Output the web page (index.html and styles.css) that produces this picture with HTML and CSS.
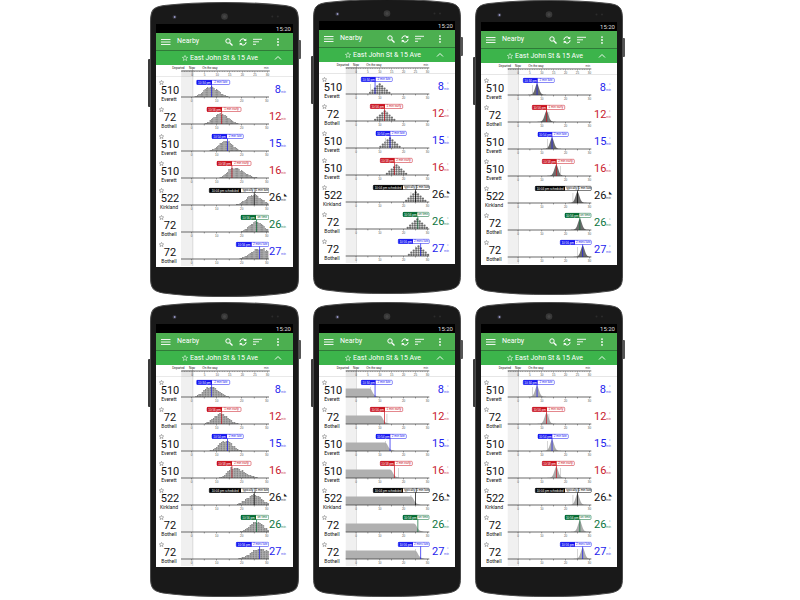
FILE: index.html
```html
<!DOCTYPE html>
<html lang="en">
<head>
<meta charset="utf-8">
<title>Nearby departures</title>
<link rel="stylesheet" href="styles.css">
</head>
<body>
<main class="gallery" id="gallery"></main>

<template id="phone-template">
  <article class="phone">
    <svg class="shell" viewBox="-3 0 154 295" preserveAspectRatio="none" aria-hidden="true">
      <rect x="-2" y="57" width="4" height="48" rx="1" fill="#3a3a3a"/>
      <rect x="146" y="38" width="4" height="19" rx="1" fill="#555"/>
      <path d="M.5 20C.5 8 3 5 14 3.500C34 1.200 54 .5 74 .5S114 1.200 134 3.500C145 5 147.500 8 147.500 20V275C147.500 285 146 289 135 291C115 294 94 294.500 74 294.500S33 294 13 291C2 289 .5 285 .5 275Z" fill="#191919" stroke="#4a4a4a"/>
      <circle cx="74" cy="14.500" r="3.300" fill="#383838"/>
      <circle cx="74" cy="14.500" r="1.500" fill="#454545"/>
      <circle cx="24.300" cy="15" r="2" fill="#34343c"/>
      <circle cx="24.500" cy="15" r=".9" fill="#9a9acb"/>
      <circle cx="121.500" cy="14.500" r="1" fill="#2c2c2c"/>
      <circle cx="127" cy="14.500" r="1" fill="#2c2c2c"/>
    </svg>
    <section class="screen">
      <div class="status">15:20</div>
      <header class="toolbar">
        <button class="tool menu" aria-label="Menu"><svg viewBox="0 0 10 8"><path d="M0 1.500H9.500M0 4H9.500M0 6.500H9.500" stroke-width=".9"/></svg></button>
        <h2 class="title">Nearby</h2>
        <button class="tool" aria-label="Search"><svg viewBox="0 0 8 8"><circle cx="3" cy="3" r="2.200"/><path d="M4.700 4.700L7.500 7.500" stroke-width="1.300"/></svg></button>
        <button class="tool" aria-label="Refresh"><svg viewBox="0 0 8 8"><path d="M.9 3.800A3 3 0 0 1 6.400 2.200M7.100 4.200A3 3 0 0 1 1.600 5.800"/><path d="M7.300 .4V3.100H4.600ZM.7 7.600V4.900H3.400Z" fill="#fff" stroke="none"/></svg></button>
        <button class="tool sort" aria-label="Sort"><svg viewBox="0 0 9 8"><path d="M0 1.300H9M0 3.800H6M0 6.300H3" stroke-width=".9"/></svg></button>
        <button class="tool more" aria-label="More"><svg viewBox="0 0 8 8"><g fill="#fff" stroke="none"><circle cx="4" cy="1.100" r=".9"/><circle cx="4" cy="4" r=".9"/><circle cx="4" cy="6.900" r=".9"/></g></svg></button>
      </header>
      <div class="stop">
        <svg class="stop-star" viewBox="0 0 12 12" aria-hidden="true"><path d="M6 .8L7.500 4.400L11.400 4.700L8.400 7.200L9.400 11L6 8.900L2.600 11L3.600 7.200L.6 4.700L4.500 4.400Z"/></svg>
        <h3 class="stop-name">East John St &amp; 15 Ave</h3>
        <button class="tool collapse" aria-label="Collapse"><svg viewBox="0 0 8 8"><path d="M1 5.500L4 2.500L7 5.500" stroke-width=".9"/></svg></button>
      </div>
      <div class="legend"></div>
      <div class="rows"></div>
    </section>
  </article>
</template>
<script src="script.js"></script>
</body>
</html>
```
FILE: styles.css
```css
* { box-sizing: border-box; }
body {
  margin: 0;
  background: #fff;
  font-family: Roboto, "Liberation Sans", sans-serif;
  overflow: hidden;
}
h2, h3 { margin: 0; font-weight: 400; }

.gallery {
  display: grid;
  grid-template-columns: 149px 148px 148px;
  justify-content: center;
  align-items: start;
  gap: 5px 14px;
  padding: 2px 27px 0 0;
}
.phone {
  position: relative;
  padding: 22px 6px 30px;
}
.phone.raised { margin-top: -3px; }
.phone.lifted { margin-top: -2px; }
.shell {
  position: absolute;
  top: 0;
  left: -3px;
  width: calc(100% + 6px);
  height: 100%;
}
.screen {
  position: relative;
  background: #fff;
  overflow: hidden;
}
.status {
  background: #000;
  color: #ddd;
  font-size: 6px;
  line-height: 10px;
  height: 9px;
  text-align: right;
  padding-right: 2px;
}
.toolbar {
  display: flex;
  align-items: center;
  gap: 6px;
  height: 18px;
  padding: 0 11px 0 5px;
  background: #4caf50;
  border-bottom: 1px solid #2f7a38;
  color: #fff;
}
.title {
  flex: 1;
  font-size: 7px;
  line-height: 9px;
}
.tool {
  display: block;
  width: 8px;
  height: 8px;
  flex: none;
  padding: 0;
  border: 0;
  background: none;
}
.tool svg, .stop-star {
  display: block;
  width: 100%;
  height: 100%;
  fill: none;
  stroke: #fff;
  stroke-width: 1;
}
.menu { width: 10px; }
.sort { width: 9px; }
.more { margin-left: 6px; }
.stop {
  display: flex;
  align-items: center;
  gap: 2px;
  height: 14px;
  padding: 0 11px 0 26px;
  background: #3cb44b;
  color: #fff;
}
.stop-star { width: 6px; height: 6px; flex: none; }
.stop-name {
  flex: 1;
  font-size: 7px;
  line-height: 9px;
  white-space: nowrap;
}
.legend svg {
  display: block;
  width: 100%;
}
.rows { padding-bottom: 1px; }
.row {
  display: grid;
  grid-template-columns: 25px minmax(0, 88px) 1fr;
}
.route {
  padding-top: 3px;
  text-align: center;
}
.star {
  display: block;
  width: 5px;
  height: 5px;
  margin-left: 3px;
  padding: 0;
  border: 0;
  background: none;
}
.star svg {
  display: block;
  width: 100%;
  height: 100%;
  fill: none;
  stroke: #555;
}
.number {
  padding-left: 3px;
  font-size: 11px;
  line-height: 11px;
  color: #111;
}
.headsign {
  padding-left: 1px;
  font-size: 5px;
  line-height: 7px;
  color: #111;
}
.chart {
  display: block;
  width: 100%;
}
.eta {
  display: flex;
  align-items: baseline;
  padding-top: 7px;
  line-height: 11px;
}
.minutes {
  width: 12px;
  font-size: 11px;
  text-align: right;
}
.unit {
  font-size: 3px;
  opacity: .8;
}
.mark {
  align-self: flex-start;
  margin-left: -2px;
  font-size: 4px;
  line-height: 5px;
}
.blue { color: #2424ee; }
.red { color: #c8202c; }
.black { color: #111; }
.green { color: #0b7540; }
svg text { font-family: "Liberation Sans", sans-serif; }
```
FILE: script.js
```js
// Each route: tag edges, arrival line and distribution centre for the two axis scales.
const routes = [
  { n: '510', to: 'Everett', eta: 8, color: 'blue', at: '10:34 pm', note: '2 min late', wide: [15.7, 31, 48.7], slim: [17.3, 31.7, 48.3], t: 8, wc: 28.5, sd: [6.5, 8], dc: 35.7, sched: 26.3, flat: 25.5 },
  { n: '72', to: 'Bothell', eta: 12, color: 'red', at: '10:56 pm', note: '1 min early', wide: [26, 41, 60], slim: [26.3, 41, 58.7], t: 12, wc: 39, sd: [7, 7.5], dc: 40.7, sched: 42.7, flat: 36 },
  { n: '510', to: 'Everett', eta: 15, color: 'blue', at: '10:54 pm', note: '2 min late', wide: [31, 46, 62.3], slim: [32, 46.3, 62.3], t: 14.3, wc: 44.5, sd: [7, 6.5], dc: 46, sched: 41.3, flat: 41 },
  { n: '510', to: 'Everett', eta: 16, color: 'red', at: '10:58 pm', note: '2 min early', wide: [36, 51, 70], slim: [36.3, 50.7, 68.3], t: 16.1, wc: 52, sd: [6, 10], dc: 52.5, sched: 54.3, flat: 46 },
  { n: '522', to: 'Kirkland', eta: 26, color: 'black', at: '10:04 pm scheduled', mid: 'typically', note: '1 min late', wide: [28.3, 60, 88], slim: [29.3, 59, 85.3], t: 25, wc: 72.3, sd: [7.5, 7.5], dc: 71.7, sched: 66.7, flat: 67 },
  { n: '72', to: 'Bothell', eta: 26, color: 'green', at: '10:56 pm', note: 'on time', wide: [60, 75, 87.7], slim: [59, 73.3, 85], t: 26, wc: 75.3, sd: [7, 6.5], dc: 73.3, flat: 70 },
  { n: '72', to: 'Bothell', eta: 27, color: 'blue', at: '10:56 pm', note: '2 mins late', wide: [55.3, 70.7, 87.7], slim: [54.3, 69, 85.3], t: 27.2, wc: 78.5, sd: [9, 10], dc: 74.5, sched: 71.3, flat: 71 }
];
const inks = { blue: '#1414f0', red: '#c8101c', black: '#000', green: '#00692f' };
const scales = {
  wide: { zero: 10.7, step: 2.5, from: 0, to: 88, zone: 12.7 },
  slim: { zero: 12, step: 2.38, from: 1.7, to: 85.3, zone: 13 }
};
const phones = [
  { kind: 'columns', scale: 'wide' },
  { kind: 'dots', scale: 'slim', place: 'raised' },
  { kind: 'dense', scale: 'slim', place: 'lifted' },
  { kind: 'stripes', scale: 'wide' },
  { kind: 'area', scale: 'slim' },
  { kind: 'soft', scale: 'slim' }
];
const BASE = 20;
const rect = (x, y, w, h, fill) => `<rect x="${x.toFixed(2)}" y="${y.toFixed(2)}" width="${w.toFixed(2)}" height="${h.toFixed(2)}" fill="${fill}"/>`;
const text = (x, y, size, fill, str, anchor = 'start') => `<text x="${x}" y="${y}" font-size="${size}" fill="${fill}" text-anchor="${anchor}">${str}</text>`;

function bell(x, c, sl, sr) {
  const d = (x - c) / (x < c ? sl : sr);
  return Math.exp(-d * d / 2);
}

function distribution(kind, r, s) {
  let out = '';
  if (kind === 'columns' || kind === 'stripes') {
    const w = kind === 'columns' ? 1.25 : 1.6;
    for (let x = s.from, i = 0; x < s.to - 1; x += w, i++) {
      const wobble = i % 5 === 2 ? -1.2 : i % 7 === 3 ? 0.9 : 0;
      let h = bell(x, r.wc, r.sd[0], r.sd[1]) * 10.5;
      if (h < 0.7) continue;
      h = Math.max(1, Math.round(h + wobble * h / 10));
      out += rect(x, BASE - h, w, h, '#b0b0b0') + rect(x, BASE - h, w * 0.6, h, '#858585');
      for (let y = 2; y < h; y += 2) out += rect(x, BASE - y, w, 0.3, '#c8c8c8');
    }
  } else if (kind === 'dots') {
    for (let x = r.dc - 9.6; x <= Math.min(r.dc + 10, s.to - 1); x += 2.4) {
      const n = Math.round(bell(x, r.dc, 4.8, 4.8) * 5);
      for (let i = 0; i < n; i++) {
        out += `<circle cx="${x.toFixed(2)}" cy="${(BASE - 1.2 - i * 2.1).toFixed(2)}" r="1.150" fill="#6e6e6e"/>`;
      }
    }
  } else if (kind === 'area') {
    out += `<path d="M${s.from} ${BASE}V${BASE - 8.6}H${r.flat}C${r.flat + 3} ${BASE - 8} ${r.flat + 3} ${BASE - 2} ${r.flat + 7} ${BASE - 1}L${r.flat + 10} ${BASE}Z" fill="#b0b0b0"/>`;
  } else {
    const c = s.zero + r.t * s.step;
    let d = `M${c - 9} ${BASE}`;
    for (let k = -9; k <= 9; k += 0.5) {
      const h = 11.5 * (0.75 * Math.exp(-k * k / 8) + 0.25 * Math.exp(-Math.abs(k) / 3));
      d += `L${Math.min(c + k, s.to).toFixed(2)} ${(BASE - h).toFixed(2)}`;
    }
    out += `<path d="${d}V${BASE}Z" fill="${kind === 'dense' ? '#6c6c6c' : '#acacac'}"/>`;
  }
  return out;
}

function chart(r, phone) {
  const s = scales[phone.scale];
  const tag = r[phone.scale];
  const ink = inks[r.color];
  const x = s.zero + r.t * s.step;
  let out = rect(s.from, 0, s.zone - s.from, 27, '#f0f0f0') + rect(s.zero + 0.3, 0, 0.5, 27, '#d0d0d0');
  out += distribution(phone.kind, r, s);
  if (phone.scale === 'slim' && r.sched) out += rect(r.sched, 10, 0.5, 10, '#aaa');
  out += rect(s.from, BASE - 0.4, s.to - s.from, 0.8, '#444');
  for (let m = 0; m <= 30; m += 5) out += rect(s.zero + m * s.step - 0.3, BASE, 0.6, 1.4, '#555');
  for (let m = 0; m <= 30; m += 10) out += text(s.zero + m * s.step, 25, 3, '#555', m, 'middle');
  out += rect(x - 0.35, 7, 0.7, 13, ink);
  out += `<rect x="${tag[0]}" y="3.300" width="${tag[2] - tag[0]}" height="4.200" rx=".9" fill="#fff" stroke="${ink}" stroke-width=".5"/>`;
  out += rect(tag[0], 3.1, tag[1] - tag[0], 4.6, ink);
  out += text((tag[0] + tag[1]) / 2, 6.5, 3, '#fff', r.at, 'middle');
  if (r.mid) {
    const split = (tag[1] + tag[2]) / 2;
    out += rect(split - 0.3, 3.1, 0.6, 4.6, ink);
    out += text((tag[1] + split) / 2, 6.4, 3, ink, r.mid, 'middle') + text((split + tag[2]) / 2, 6.4, 3, ink, r.note, 'middle');
  } else {
    out += text((tag[1] + tag[2]) / 2, 6.4, 3, ink, r.note, 'middle');
  }
  return `<svg class="chart" viewBox="0 0 88 27" role="img" aria-label="Arrival distribution">${out}</svg>`;
}

function legend(phone) {
  const s = scales[phone.scale];
  const o = 25;
  let out = rect(o + s.from, 5, s.zone - s.from, 7, '#e6e6e6') + rect(o + s.zero + 0.3, 4, 0.6, 8, '#aaa');
  out += text(o + s.from - 9, 4.4, 3, '#111', 'Departed') + text(o + s.zero - 3, 4.4, 3, '#111', 'Now') + text(o + s.zero + 10.3, 4.4, 3, '#111', 'On the way') + text(o + s.to - 1, 4.4, 3, '#555', 'min', 'end');
  out += rect(o + s.from, 5.6, s.to - s.from, 0.7, '#333');
  for (let m = -4; m <= 30; m++) out += rect(o + s.zero + m * s.step - 0.2, 6, 0.4, m % 5 ? 0.8 : 1.6, '#555');
  for (let m = 0; m <= 30; m += 5) out += text(o + s.zero + m * s.step, 10.6, 3, '#555', m, 'middle');
  out += rect(0, 11.5, 136, 0.5, '#ccc');
  return `<svg viewBox="0 0 136 12" role="img" aria-label="Minutes from now">${out}</svg>`;
}

const star = '<svg viewBox="0 0 12 12"><path d="M6 .8L7.500 4.400L11.400 4.700L8.400 7.200L9.400 11L6 8.900L2.600 11L3.600 7.200L.6 4.700L4.500 4.400Z"/></svg>';
const template = document.getElementById('phone-template');

phones.forEach(phone => {
  const node = template.content.cloneNode(true);
  if (phone.place) node.querySelector('.phone').classList.add(phone.place);
  node.querySelector('.legend').innerHTML = legend(phone);
  node.querySelector('.rows').innerHTML = routes.map(r => {
    const mark = r.color === 'black' ? '◣' : phone.scale === 'slim' ? '°' : '';
    return `<div class="row">
      <div class="route"><button class="star" aria-label="Favourite">${star}</button><div class="number">${r.n}</div><div class="headsign">${r.to}</div></div>
      ${chart(r, phone)}
      <div class="eta ${r.color}"><span class="minutes">${r.eta}</span><span class="unit">min</span><span class="mark">${mark}</span></div>
    </div>`;
  }).join('');
  document.getElementById('gallery').append(node);
});
```
